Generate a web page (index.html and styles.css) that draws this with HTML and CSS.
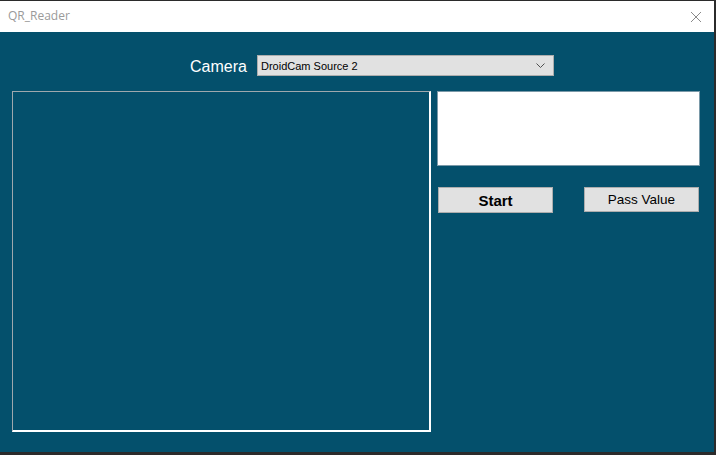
FILE: index.html
```html
<!DOCTYPE html>
<html>
<head>
<meta charset="utf-8">
<link rel="stylesheet" href="styles.css">
</head>
<body>
<div class="window">
  <div class="titlebar">
    <span class="title">QR_Reader</span>
    <svg class="close" width="12" height="12" viewBox="0 0 12 12"><path d="M1 1L11 11M11 1L1 11" stroke="#8a8a8a" stroke-width="1" fill="none"/></svg>
  </div>
  <div class="client">
    <div class="camera-row">
      <span class="label">Camera</span>
      <div class="combo">
        <span>DroidCam Source 2</span>
        <svg class="chev" width="9" height="6" viewBox="0 0 9 6"><path d="M0.5 0.5L4.5 4.5L8.5 0.5" stroke="#505050" stroke-width="1" fill="none"/></svg>
      </div>
    </div>
    <div class="main">
      <div class="picture"></div>
      <div class="side">
        <div class="textbox"></div>
        <div class="buttons">
          <div class="btn start">Start</div>
          <div class="btn pass">Pass Value</div>
        </div>
      </div>
    </div>
  </div>
</div>
</body>
</html>
```
FILE: styles.css
```css
html, body {
  margin: 0;
  padding: 0;
  background: #2b2b2b;
  width: 716px;
  height: 455px;
  overflow: hidden;
}
.window {
  margin-top: 1px;
  width: 714px;
  height: 451px;
  display: flex;
  flex-direction: column;
  font-family: "Liberation Sans", Arial, sans-serif;
}
.titlebar {
  height: 31px;
  background: #ffffff;
  display: flex;
  align-items: center;
  justify-content: space-between;
  padding: 0 12px 0 8px;
  box-sizing: border-box;
}
.title {
  font-family: "Open Sans", "Noto Sans", sans-serif;
  font-size: 12px;
  color: #9a9a9a;
  margin-top: -2px;
}
.client {
  flex: 1;
  background: #04506c;
  display: flex;
  flex-direction: column;
}
.camera-row {
  display: flex;
  align-items: center;
  margin-top: 23px;
  padding-left: 190px;
  height: 21px;
}
.label {
  color: #ffffff;
  font-size: 16px;
  width: 67px;
  margin-top: 3px;
}
.combo {
  width: 297px;
  height: 21px;
  box-sizing: border-box;
  background: #e1e1e1;
  border: 1px solid #adadad;
  display: flex;
  align-items: center;
  justify-content: space-between;
  padding: 0 8px 0 3px;
  font-size: 11px;
  color: #000;
}
.main {
  display: flex;
  margin-top: 15px;
  padding-left: 12px;
}
.picture {
  width: 419px;
  height: 341px;
  box-sizing: border-box;
  border-top: 1px solid #9fa8ad;
  border-left: 1px solid #9fa8ad;
  border-right: 2px solid #ffffff;
  border-bottom: 2px solid #ffffff;
}
.side {
  margin-left: 6px;
  display: flex;
  flex-direction: column;
}
.textbox {
  width: 263px;
  height: 75px;
  box-sizing: border-box;
  background: #ffffff;
  border: 1px solid #7a99a8;
}
.buttons {
  width: 262px;
  box-sizing: border-box;
  display: flex;
  justify-content: space-between;
  margin-top: 21px;
  padding-left: 1px;
}
.btn {
  width: 115px;
  height: 26px;
  box-sizing: border-box;
  background: #e1e1e1;
  border: 1px solid #adadad;
  display: flex;
  align-items: center;
  justify-content: center;
  color: #000;
}
.start {
  font-weight: bold;
  font-size: 15px;
}
.pass {
  font-size: 13.5px;
  height: 25px;
}
```
